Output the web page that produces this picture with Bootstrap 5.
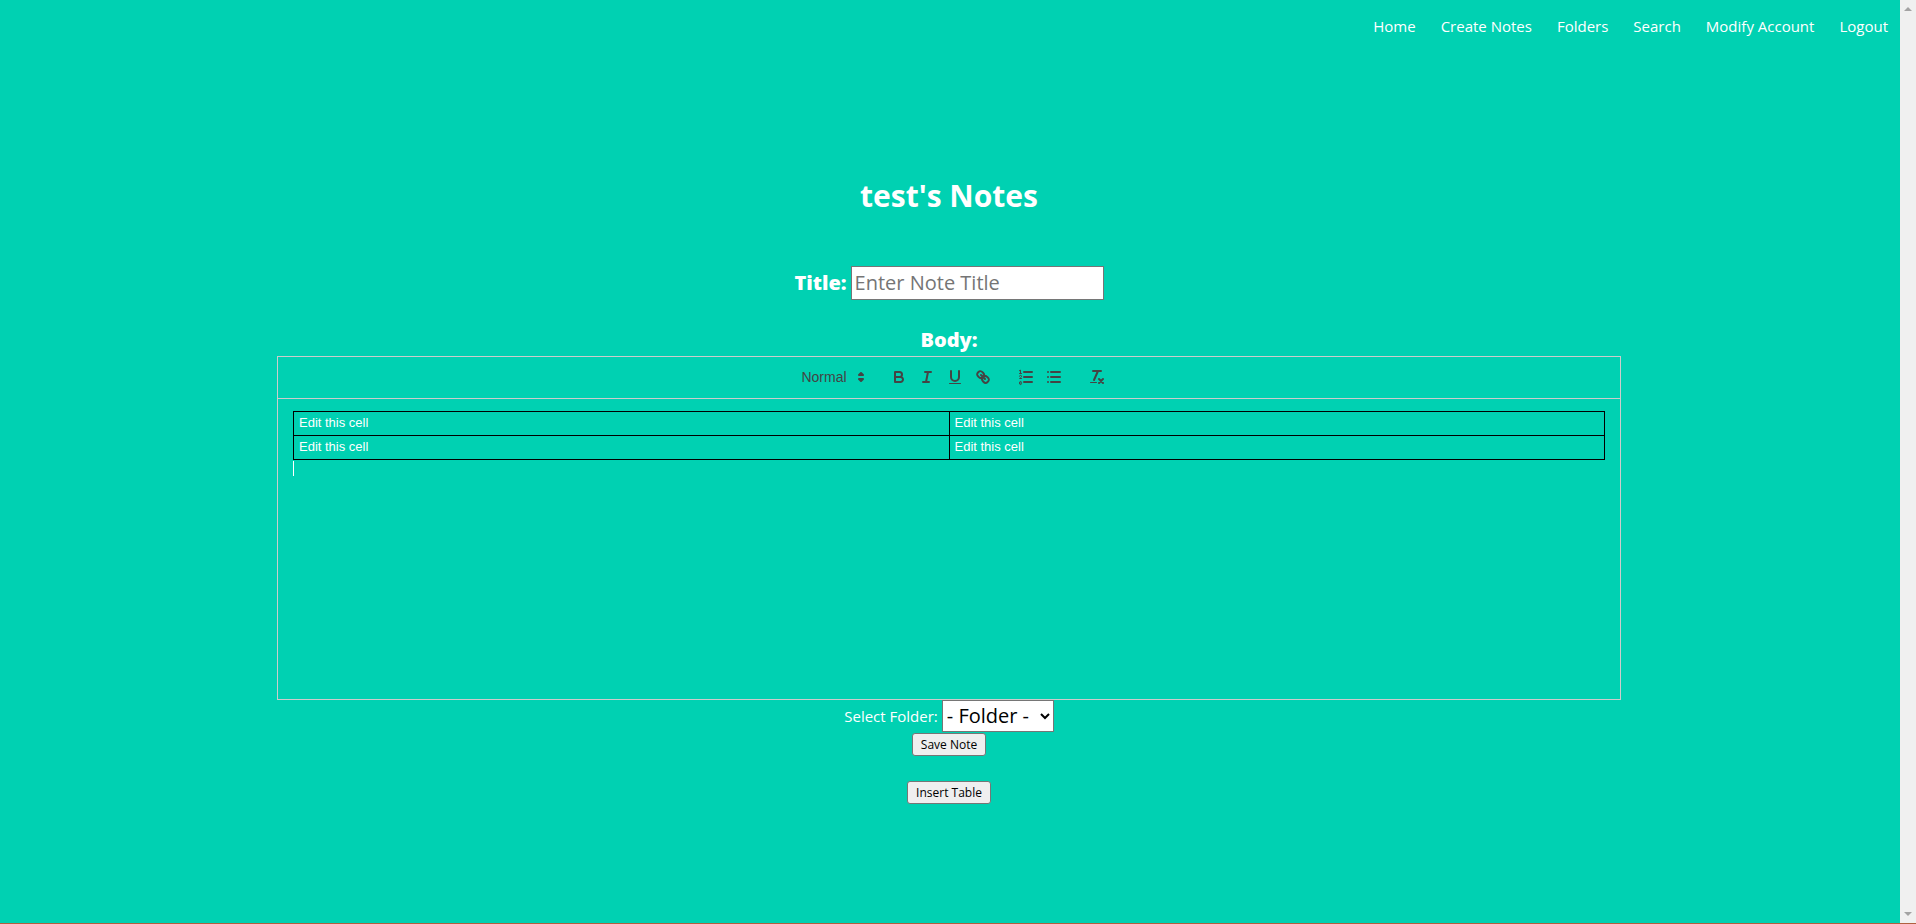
<!DOCTYPE html>
<html lang="en">
<head>
<meta charset="utf-8">
<meta name="viewport" content="width=device-width, initial-scale=1">
<title>test's Notes</title>
<link href="https://cdn.jsdelivr.net/npm/bootstrap@5.3.0/dist/css/bootstrap.min.css" rel="stylesheet">
<style>
  body { background: #00d1b2; color: #fff; font: 15px/24px "Open Sans", "Noto Sans", sans-serif; }
  .page-shell { border-bottom: 1px solid #b0603f; }
  .top-links { height: 52px; }
  .top-links .nav-link { color: #fff; padding: 0 12px 0 13px; }
  main { padding: 6px 2px 0 0; }
  .scroll-rail { width: 16px; background: #f0f0f0; padding: 7px 0; }
  .notes-title { font-size: 30px; line-height: 36px; font-weight: 700; margin: 0 0 52px; }
  .field-label { font-size: 20px; line-height: 32px; font-weight: 800; }
  .title-box { width: 253px; height: 34px; padding: 1px 3px; border: 1px solid #767676; border-radius: 0; font-size: 20px; color: #000; }
  .title-box::placeholder { color: #757575; }
  .editor { width: 100%; max-width: 1344px; border: 1px solid #ccc; font-family: "Liberation Sans", Arial, sans-serif; }
  .editor-tools { padding: 8px 23px 8px 8px; border-bottom: 1px solid #ccc; height: 42px; gap: 15px; }
  .tool { width: 28px; height: 24px; padding: 3px 5px; border: 0; background: none; display: block; }
  .tool svg, .style-pick svg { width: 18px; height: 18px; display: block; }
  .ln { fill: none; stroke: #444; stroke-width: 2; stroke-linecap: round; stroke-linejoin: round; }
  .thin { stroke-width: 1; }
  .solid { fill: #444; }
  .style-pick { width: 98px; height: 24px; }
  .style-pick select { width: 100%; height: 24px; padding: 0 2px 0 8px; border: 0; background: none; appearance: none; color: #444; font-size: 14px; font-weight: 500; text-align: center; text-align-last: center; }
  .style-pick svg { top: 3px; right: 0; pointer-events: none; }
  .editor-body { padding: 12px 15px; min-height: 300px; font-size: 13px; line-height: 18px; outline: 0; }
  .cells { width: 100%; table-layout: fixed; border-collapse: collapse; }
  .cells td { border: 1px solid #000; padding: 2px 5px 3px; }
  .caret { width: 1px; height: 15px; background: #fff; margin-top: 1px; }
  .folder-pick { height: 32px; padding: 0; border: 1px solid #767676; border-radius: 0; background: #fff; color: #000; font-size: 20px; width: 112px; }
  .plain-btn { font-size: 12px; line-height: 17px; padding: 2px 8px; height: 23px; margin-top: 1px; border: 1px solid #767676; border-radius: 3px; background: #efefef; color: #000; }
</style>
</head>
<body>
<div class="page-shell d-flex min-vh-100">
  <div class="d-flex flex-column flex-grow-1">
    <nav class="top-links nav justify-content-end align-items-center" aria-label="Main">
      <a class="nav-link" href="#">Home</a>
      <a class="nav-link" href="#">Create Notes</a>
      <a class="nav-link" href="#">Folders</a>
      <a class="nav-link" href="#">Search</a>
      <a class="nav-link" href="#">Modify Account</a>
      <a class="nav-link" href="#">Logout</a>
    </nav>
    <main class="d-flex flex-column align-items-center flex-grow-1 justify-content-center">
      <h1 class="notes-title">test's Notes</h1>
      <div class="d-flex align-items-center gap-1 mb-4">
        <label class="field-label" for="note-title">Title:</label>
        <input class="title-box" id="note-title" type="text" placeholder="Enter Note Title">
      </div>
      <div class="field-label" id="body-label">Body:</div>
      <section class="editor" aria-labelledby="body-label">
        <div class="editor-tools d-flex justify-content-center">
          <div class="style-pick position-relative">
            <select aria-label="Text style"><option>Normal</option><option>Heading 1</option><option>Heading 2</option></select>
            <svg class="position-absolute" viewBox="0 0 18 18"><path class="solid" stroke="#444" stroke-width="2" stroke-linejoin="round" d="M7 11 9 13 11 11ZM7 7 9 5 11 7Z"/></svg>
          </div>
          <div class="d-flex">
            <button class="tool" type="button" aria-label="Bold"><svg viewBox="0 0 18 18"><path class="ln" d="M5 4H9.5A2.5 2.5 0 0 1 12 6.500A2.500 2.500 0 0 1 9.500 9H5ZM5 9H10.500A2.500 2.500 0 0 1 13 11.500A2.500 2.500 0 0 1 10.500 14H5Z"/></svg></button>
            <button class="tool" type="button" aria-label="Italic"><svg viewBox="0 0 18 18"><path class="ln" d="M7 4H13M5 14H11M8 14 10 4"/></svg></button>
            <button class="tool" type="button" aria-label="Underline"><svg viewBox="0 0 18 18"><path class="ln" d="M5 3V9A4.012 4.012 0 0 0 9 13A4.012 4.012 0 0 0 13 9V3"/><rect class="solid" x="3" y="15" width="12" height="1" rx=".5"/></svg></button>
            <button class="tool" type="button" aria-label="Link"><svg viewBox="0 0 18 18"><path class="ln" d="M7 7 11 11M8.900 4.577a3.476 3.476 0 0 1 .36 4.679A3.476 3.476 0 0 1 4.577 8.900C3.185 7.500 2.035 6.400 4.217 4.217S7.500 3.185 8.900 4.577ZM13.423 9.100a3.476 3.476 0 0 0-4.679-.36 3.476 3.476 0 0 0 .36 4.679c1.392 1.392 2.500 2.542 4.679.36S14.815 10.500 13.423 9.100Z"/></svg></button>
          </div>
          <div class="d-flex">
            <button class="tool" type="button" aria-label="Numbered list"><svg viewBox="0 0 18 18"><path class="ln" d="M7 4H15M7 9H15M7 14H15"/><path class="ln thin" d="M2.500 5.500H4.500"/><path class="solid" d="M3.500 6A.5.5 0 0 1 3 5.500V3.085L2.724 3.223A.5.5 0 0 1 2.276 2.329L3.276 1.829A.5.5 0 0 1 4 2.276V5.500A.5.500 0 0 1 3.500 6Z"/><path class="ln thin" d="M4.500 10.500H2.500C2.500 10.300 4.500 9.400 4.500 8.500A.959.959 0 0 0 2.500 8.200M2.500 14.600A.959.959 0 0 1 4.500 14.350C4.500 14.850 4.100 15 3.500 15C4.100 15 4.500 15.250 4.500 15.700A.959.959 0 0 1 2.500 15.400"/></svg></button>
            <button class="tool" type="button" aria-label="Bulleted list"><svg viewBox="0 0 18 18"><path class="ln" d="M6 4H15M6 9H15M6 14H15M3 4V4M3 9V9M3 14V14"/></svg></button>
          </div>
          <button class="tool" type="button" aria-label="Clear formatting"><svg viewBox="0 0 18 18"><path class="ln" d="M5 3H13M6 12 10 3M11 11 15 15M15 11 11 15"/><rect class="solid" x="2" y="14" width="7" height="1" rx=".5"/></svg></button>
        </div>
        <div class="editor-body" contenteditable="true" role="textbox" aria-labelledby="body-label">
          <table class="cells">
            <tr><td>Edit this cell</td><td>Edit this cell</td></tr>
            <tr><td>Edit this cell</td><td>Edit this cell</td></tr>
          </table>
          <div class="caret"></div>
        </div>
      </section>
      <div class="d-flex align-items-center gap-1">
        <label for="folder">Select Folder:</label>
        <select class="folder-pick" id="folder"><option>- Folder -</option></select>
      </div>
      <button class="plain-btn mb-4" type="button">Save Note</button>
      <button class="plain-btn" type="button">Insert Table</button>
    </main>
  </div>
  <div class="scroll-rail d-flex flex-column align-items-center justify-content-between flex-shrink-0" aria-hidden="true">
    <svg width="8" height="4"><path fill="#a3a3a3" d="M0 4 4 0 8 4Z"/></svg>
    <svg width="8" height="4"><path fill="#a3a3a3" d="M0 0 4 4 8 0Z"/></svg>
  </div>
</div>
<script src="https://cdn.jsdelivr.net/npm/bootstrap@5.3.0/dist/js/bootstrap.bundle.min.js"></script>
</body>
</html>
